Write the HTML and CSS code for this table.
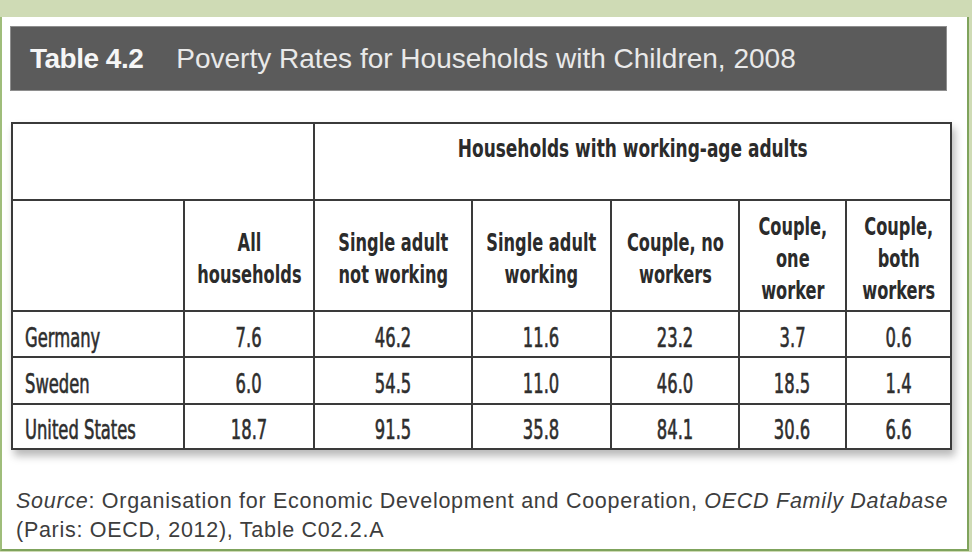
FILE: index.html
```html
<!DOCTYPE html>
<html lang="en">
<head>
<meta charset="utf-8">
<title>Table 4.2 Poverty Rates for Households with Children, 2008</title>
<link rel="stylesheet" href="styles.css">
</head>
<body>
<div class="frame">
  <div class="title-bar">
    <span class="title-num">Table 4.2</span>
    <span class="title-text">Poverty Rates for Households with Children, 2008</span>
  </div>
  <table class="data">
    <colgroup>
      <col class="c-country">
      <col class="c-all">
      <col class="c-sanw">
      <col class="c-saw">
      <col class="c-cnw">
      <col class="c-cow">
      <col class="c-cbw">
    </colgroup>
    <thead>
      <tr class="row-group">
        <th colspan="2"></th>
        <th colspan="5" class="group"><span class="t">Households with working-age adults</span></th>
      </tr>
      <tr class="row-head">
        <th></th>
        <th><span class="t">All<br>households</span></th>
        <th><span class="t">Single adult<br>not working</span></th>
        <th><span class="t">Single adult<br>working</span></th>
        <th><span class="t">Couple, no<br>workers</span></th>
        <th><span class="t">Couple,<br>one<br>worker</span></th>
        <th><span class="t">Couple,<br>both<br>workers</span></th>
      </tr>
    </thead>
    <tbody>
      <tr class="r1">
        <td class="country"><span class="t">Germany</span></td>
        <td><span class="t">7.6</span></td>
        <td><span class="t">46.2</span></td>
        <td><span class="t">11.6</span></td>
        <td><span class="t">23.2</span></td>
        <td><span class="t">3.7</span></td>
        <td><span class="t">0.6</span></td>
      </tr>
      <tr class="r2">
        <td class="country"><span class="t">Sweden</span></td>
        <td><span class="t">6.0</span></td>
        <td><span class="t">54.5</span></td>
        <td><span class="t">11.0</span></td>
        <td><span class="t">46.0</span></td>
        <td><span class="t">18.5</span></td>
        <td><span class="t">1.4</span></td>
      </tr>
      <tr class="r3">
        <td class="country"><span class="t">United States</span></td>
        <td><span class="t">18.7</span></td>
        <td><span class="t">91.5</span></td>
        <td><span class="t">35.8</span></td>
        <td><span class="t">84.1</span></td>
        <td><span class="t">30.6</span></td>
        <td><span class="t">6.6</span></td>
      </tr>
    </tbody>
  </table>
  <p class="source"><em>Source</em>: Organisation for Economic Development and Cooperation, <em>OECD Family Database</em><br>(Paris: OECD, 2012), Table C02.2.A</p>
</div>
</body>
</html>
```
FILE: styles.css
```css
html, body {
  margin: 0;
  padding: 0;
}
body {
  background: #cfdbb5;
  width: 972px;
  height: 552px;
  overflow: hidden;
}
.frame {
  box-sizing: border-box;
  margin-top: 17px;
  width: 969px;
  height: 534px;
  background: #ffffff;
  border-left: 2px solid #9fbd7a;
  border-right: 2px solid #7fa35c;
  border-bottom: 2px solid #7fa35c;
  padding: 9px 18px 0 8px;
}
.title-bar {
  box-sizing: border-box;
  width: 937px;
  height: 65px;
  background: #5b5b5b;
  border: 1px solid #8e8e8e;
  display: flex;
  align-items: center;
  padding-left: 19px;
  font-family: "Liberation Sans", Arial, sans-serif;
  font-size: 28px;
  color: #e9e9e9;
}
.title-num {
  font-weight: bold;
  color: #f6f6f6;
  letter-spacing: -0.5px;
  margin-right: 33px;
}
.title-text {
  font-weight: normal;
}
.data {
  margin-top: 31px;
  margin-left: 1px;
  border-collapse: separate;
  border-spacing: 0;
  table-layout: fixed;
  width: 939px;
  border-top: 2px solid #3a3a3a;
  border-left: 2px solid #3a3a3a;
  box-shadow: 3px 6px 8px rgba(0, 0, 0, 0.28);
  font-family: "DejaVu Sans Condensed", "DejaVu Sans", sans-serif;
  font-stretch: condensed;
  color: #2e2e2e;
}
.c-country { width: 172px; }
.c-all { width: 130px; }
.c-sanw { width: 158px; }
.c-saw { width: 139px; }
.c-cnw { width: 128px; }
.c-cow { width: 107px; }
.c-cbw { width: 105px; }
.data th,
.data td {
  box-sizing: border-box;
  border-right: 2px solid #3a3a3a;
  border-bottom: 2px solid #3a3a3a;
  padding: 0;
  text-align: center;
  white-space: nowrap;
  overflow: visible;
}
.t {
  display: inline-block;
  margin: 0 -60px;
  transform: scaleX(0.72);
  transform-origin: 50% 50%;
}
.data th {
  font-weight: bold;
  font-size: 25px;
  line-height: 32px;
  color: #2b2b2b;
}
.row-group th {
  height: 77px;
  vertical-align: top;
  padding-top: 9px;
  line-height: 31px;
}
.row-group .t {
  transform: scaleX(0.755);
}
.row-head th {
  height: 111px;
  vertical-align: middle;
  padding-top: 6px;
}
.data td {
  font-size: 26px;
  line-height: 30px;
  vertical-align: middle;
  padding-top: 7px;
  -webkit-text-stroke: 0.6px #2e2e2e;
}
.data td .t {
  transform: scaleX(0.70);
}
.r1 td { height: 46px; }
.r2 td { height: 47px; }
.r3 td { height: 45px; }
.data td.country {
  text-align: left;
  padding-left: 12px;
}
.data td.country .t {
  margin: 0 -60px 0 0;
  transform-origin: 0 50%;
}
.source {
  margin: 37px -20px 0 6px;
  white-space: nowrap;
  font-family: "Liberation Sans", Arial, sans-serif;
  font-size: 21.5px;
  line-height: 29px;
  letter-spacing: 0.72px;
  color: #3d3d3d;
}
.source em {
  font-style: italic;
}
```
